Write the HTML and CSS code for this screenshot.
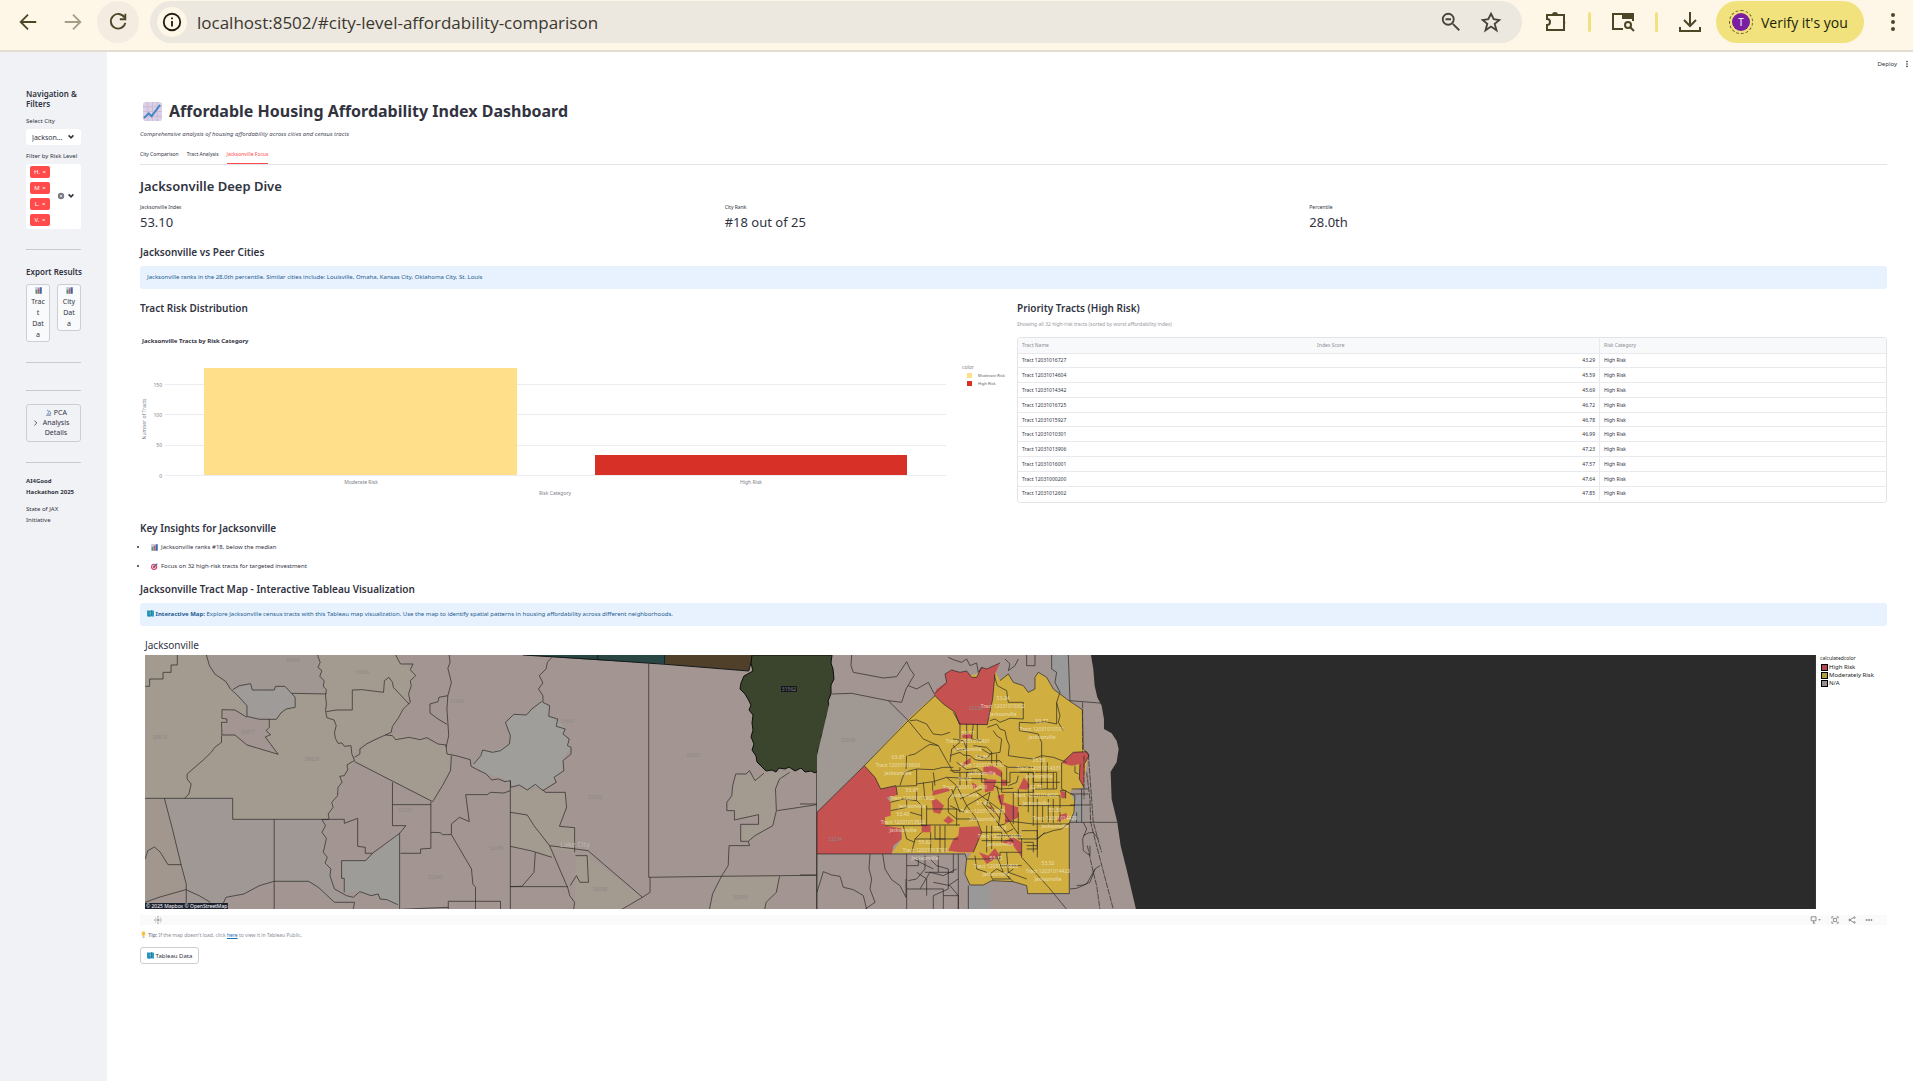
FILE: index.html
```html
<!DOCTYPE html>
<html lang="en">

<head>
    <meta charset="UTF-8">
    <meta name="viewport" content="width=device-width, initial-scale=1.0">
    <title>Affordable Housing Affordability Index Dashboard</title>
    <link rel="stylesheet" href="styles.css">
</head>

<body>

    <!-- Shared emoji symbols -->
    <svg class="symbols" aria-hidden="true">
        <symbol id="emoji-trend" viewBox="0 0 20 20">
            <rect x="0" y="0" width="20" height="20" rx="3" fill="#d9d0e8" />
            <path d="M5 0v20M10 0v20M15 0v20M0 5h20M0 10h20M0 15h20" stroke="#cdb8d4" stroke-width="1" fill="none" />
            <path d="M1 17l5-5 3 3 9-12" stroke="#3f84c4" stroke-width="2" fill="none" />
        </symbol>
        <symbol id="emoji-bars" viewBox="0 0 20 20">
            <rect width="20" height="20" rx="2" fill="#c9cfe0" />
            <rect x="2" y="8" width="5" height="11" fill="#4d9a6a" />
            <rect x="8" y="4" width="5" height="15" fill="#c65b6e" />
            <rect x="14" y="1" width="5" height="18" fill="#3568b4" />
        </symbol>
        <symbol id="emoji-target" viewBox="0 0 20 20">
            <circle cx="9" cy="11" r="9" fill="#d0446a" />
            <circle cx="9" cy="11" r="6" fill="#f3e6ee" />
            <circle cx="9" cy="11" r="4" fill="#d0446a" />
            <path d="M9 11L18 2" stroke="#3c6fae" stroke-width="3" />
        </symbol>
        <symbol id="emoji-map" viewBox="0 0 20 20">
            <path d="M0 1l6 1 7-1 7 1v17l-7-1-7 1-6-1z" fill="#2e9cc8" />
            <path d="M6 2v17M13 1v17" stroke="#1c6f9e" stroke-width="2" />
            <path d="M8 5l4 3-2 6-3-4z" fill="#79bf7d" />
        </symbol>
        <symbol id="emoji-bulb" viewBox="0 0 20 20">
            <path d="M10 1a6 6 0 0 0-3 11v3h6v-3a6 6 0 0 0-3-11z" fill="#f6c445" />
            <rect x="7" y="16" width="6" height="3" fill="#a5a19a" />
        </symbol>
        <symbol id="emoji-microscope" viewBox="0 0 20 20">
            <path d="M7 2l4 9M3 18h14M5 14h8M11 5c6 1 7 9 2 12" stroke="#4a6d9c" stroke-width="2" fill="none" />
        </symbol>
        <symbol id="chevron" viewBox="0 0 10 10">
            <path d="M2 3l3 3 3-3" stroke="#31333f" stroke-width="2" fill="none" />
        </symbol>
    </svg>

    <div class="browser-bar">
        <button class="nav-button" aria-label="Back">
            <svg viewBox="0 0 24 24"><path d="M21 12H5M12 4l-8 8 8 8" /></svg>
        </button>
        <button class="nav-button disabled" aria-label="Forward">
            <svg viewBox="0 0 24 24"><path d="M3 12h16M12 4l8 8-8 8" /></svg>
        </button>
        <button class="nav-button reload" aria-label="Reload">
            <svg viewBox="0 0 24 24"><path d="M19 7a8 8 0 1 0 1 6M20 3v6h-6" /></svg>
        </button>
        <div class="address">
            <span class="site-info">
                <svg viewBox="0 0 24 24"><circle cx="12" cy="12" r="9" /><path d="M12 11v6M12 7v2" /></svg>
            </span>
            <input class="address-input" type="text" aria-label="Address" value="localhost:8502/#city-level-affordability-comparison">
            <button class="address-button" aria-label="Zoom">
                <svg viewBox="0 0 24 24"><circle cx="9" cy="9" r="6" /><path d="M14 14l7 7M6 9h6" /></svg>
            </button>
            <button class="address-button" aria-label="Bookmark">
                <svg viewBox="0 0 24 24"><path d="M12 3l3 6 6 1-5 4 2 7-6-4-6 4 2-7-5-4 6-1z" /></svg>
            </button>
        </div>
        <button class="tool-button" aria-label="Extensions">
            <svg viewBox="0 0 24 24"><path d="M3 5h17v6v9H3v-5a3 3 0 0 0 0-6z" /><path d="M8 5a3 3 0 0 1 6 0zM20 10a3 3 0 0 1 0 5z" fill="#4b4726" stroke="none" /></svg>
        </button>
        <span class="divider"></span>
        <button class="tool-button" aria-label="Search tabs">
            <svg viewBox="0 0 24 24"><path d="M12 19H2V4h20v7" /><path d="M12 4h10v4H12z" fill="#4b4726" /><circle cx="17" cy="15" r="3" /><path d="M19 17l4 4" /></svg>
        </button>
        <span class="divider"></span>
        <button class="tool-button" aria-label="Downloads">
            <svg viewBox="0 0 24 24"><path d="M12 2v13M6 10l6 6 6-6M2 17v4h20v-4" /></svg>
        </button>
        <button class="verify">
            <span class="avatar-ring"><span class="avatar">T</span></span>
            Verify it's you
        </button>
        <button class="menu-button" aria-label="Menu">
            <svg viewBox="0 0 6 22"><circle cx="3" cy="4" r="2" /><circle cx="3" cy="11" r="2" /><circle cx="3" cy="18" r="2" /></svg>
        </button>
    </div>

    <div class="app">
        <aside class="sidebar">
            <h2 class="side-title">Navigation &amp; Filters</h2>
            <label class="side-label" for="citySelect">Select City</label>
            <div class="select-box">
                <select id="citySelect">
                    <option>Jackson...</option>
                </select>
                <svg><use href="#chevron" /></svg>
            </div>
            <p class="side-label" id="riskLabel">Filter by Risk Level</p>
            <div class="multi-box" role="group" aria-labelledby="riskLabel">
                <div class="tags">
                    <button class="tag">H. <span>×</span></button>
                    <button class="tag">M <span>×</span></button>
                    <button class="tag">L. <span>×</span></button>
                    <button class="tag">V. <span>×</span></button>
                </div>
                <button class="clear" aria-label="Clear all">
                    <svg viewBox="0 0 10 10"><circle cx="5" cy="5" r="4" fill="#7b7d85" /><path d="M4 4l2 2M6 4l-2 2" stroke="#fff" /></svg>
                </button>
                <svg class="chevron"><use href="#chevron" /></svg>
            </div>
            <hr>
            <h2 class="side-title export">Export Results</h2>
            <div class="export-buttons">
                <button class="side-button"><svg class="emoji"><use href="#emoji-bars" /></svg><br>Trac<br>t<br>Dat<br>a</button>
                <button class="side-button"><svg class="emoji"><use href="#emoji-bars" /></svg><br>City<br>Dat<br>a</button>
            </div>
            <hr>
            <hr class="close">
            <button class="expander">
                <svg class="arrow" viewBox="0 0 10 10"><path d="M3 2l3 3-3 3" /></svg>
                <span><svg class="emoji"><use href="#emoji-microscope" /></svg> PCA Analysis Details</span>
            </button>
            <hr>
            <p class="side-text"><strong>AI4Good Hackathon 2025</strong></p>
            <p class="side-text">State of JAX Initiative</p>
        </aside>

        <main class="main">
            <div class="app-header">
                <button class="deploy">Deploy</button>
                <button class="app-menu" aria-label="App menu">
                    <svg viewBox="0 0 4 10"><circle cx="2" cy="2" r="1" /><circle cx="2" cy="5" r="1" /><circle cx="2" cy="8" r="1" /></svg>
                </button>
            </div>

            <div class="content">
                <h1><svg class="title-emoji"><use href="#emoji-trend" /></svg>Affordable Housing Affordability Index Dashboard</h1>
                <p class="subtitle">Comprehensive analysis of housing affordability across cities and census tracts</p>

                <nav class="tabs">
                    <button class="tab">City Comparison</button>
                    <button class="tab">Tract Analysis</button>
                    <button class="tab active">Jacksonville Focus</button>
                </nav>

                <h2>Jacksonville Deep Dive</h2>
                <div class="metrics">
                    <div>
                        <p class="metric-label">Jacksonville Index</p>
                        <p class="metric-value">53.10</p>
                    </div>
                    <div>
                        <p class="metric-label">City Rank</p>
                        <p class="metric-value">#18 out of 25</p>
                    </div>
                    <div>
                        <p class="metric-label">Percentile</p>
                        <p class="metric-value">28.0th</p>
                    </div>
                </div>

                <h3>Jacksonville vs Peer Cities</h3>
                <div class="info">Jacksonville ranks in the 28.0th percentile. Similar cities include: Louisville, Omaha, Kansas City, Oklahoma City, St. Louis</div>

                <div class="columns">
                    <section>
                        <h3>Tract Risk Distribution</h3>
                        <svg class="chart" viewBox="0 0 870 190">
                            <text class="chart-title" x="2" y="23">Jacksonville Tracts by Risk Category</text>
                            <path class="grid" d="M25 64.500H806M25 94.500H806M25 125.500H806M25 155.500H806" />
                            <rect x="64" y="48" width="313" height="107" fill="#ffdf8a" />
                            <rect x="455" y="135" width="312" height="20" fill="#d73027" />
                            <g class="tick end">
                                <text x="22" y="67">150</text>
                                <text x="22" y="97">100</text>
                                <text x="22" y="127">50</text>
                                <text x="22" y="158">0</text>
                            </g>
                            <g class="tick middle">
                                <text x="221" y="164">Moderate Risk</text>
                                <text x="611" y="164">High Risk</text>
                            </g>
                            <text class="axis" x="415" y="175">Risk Category</text>
                            <text class="axis" transform="translate(6 99) rotate(-90)">Number of Tracts</text>
                            <text class="axis start" x="822" y="49">color</text>
                            <rect x="827" y="53" width="5" height="5" fill="#ffdf8a" />
                            <rect x="827" y="61" width="5" height="5" fill="#d73027" />
                            <g class="tick legend-text">
                                <text x="838" y="57">Moderate Risk</text>
                                <text x="838" y="65">High Risk</text>
                            </g>
                        </svg>
                    </section>
                    <section>
                        <h3>Priority Tracts (High Risk)</h3>
                        <p class="caption">Showing all 32 high-risk tracts (sorted by worst affordability index)</p>
                        <div class="table-frame">
                            <table>
                                <thead>
                                    <tr><th>Tract Name</th><th>Index Score</th><th>Risk Category</th></tr>
                                </thead>
                                <tbody>
                                    <tr><td>Tract 12031016727</td><td>43.29</td><td>High Risk</td></tr>
                                    <tr><td>Tract 12031014604</td><td>45.59</td><td>High Risk</td></tr>
                                    <tr><td>Tract 12031014342</td><td>45.69</td><td>High Risk</td></tr>
                                    <tr><td>Tract 12031016725</td><td>46.72</td><td>High Risk</td></tr>
                                    <tr><td>Tract 12031015927</td><td>46.78</td><td>High Risk</td></tr>
                                    <tr><td>Tract 12031010301</td><td>46.99</td><td>High Risk</td></tr>
                                    <tr><td>Tract 12031013906</td><td>47.23</td><td>High Risk</td></tr>
                                    <tr><td>Tract 12031016001</td><td>47.57</td><td>High Risk</td></tr>
                                    <tr><td>Tract 12031000200</td><td>47.64</td><td>High Risk</td></tr>
                                    <tr><td>Tract 12031012602</td><td>47.85</td><td>High Risk</td></tr>
                                </tbody>
                            </table>
                        </div>
                    </section>
                </div>

                <h3>Key Insights for Jacksonville</h3>
                <ul class="insights">
                    <li><svg class="emoji"><use href="#emoji-bars" /></svg> Jacksonville ranks #18, below the median</li>
                    <li><svg class="emoji"><use href="#emoji-target" /></svg> Focus on 32 high-risk tracts for targeted investment</li>
                </ul>

                <h3>Jacksonville Tract Map - Interactive Tableau Visualization</h3>
                <div class="info"><svg class="emoji"><use href="#emoji-map" /></svg> <strong>Interactive Map:</strong> Explore Jacksonville census tracts with this Tableau map visualization. Use the map to identify spatial patterns in housing affordability across different neighborhoods.</div>

                <div class="viz">
                    <p class="viz-title">Jacksonville</p>
                    <div class="viz-body">
                        <div class="map-wrap">
                            <svg class="map" viewBox="145 656 1671 254">
                                <rect x="145" y="656" width="1671" height="254" fill="#a39692" />

                                <!-- Western counties -->
                                <g transform="translate(130 640) scale(.4464 .3333)">
                                    <g class="land">
                                        <path fill="#a39b90" d="M34 48H171L180 90L215 130L262 190V240H330L345 210L370 205V163L440 165V236L460 260V310L500 325L503 365L480 410L465 460L450 540H230V478H34Z" />
                                        <path fill="#a09793" d="M171 48H420L430 90L440 165L368 163L340 142L323 152L270 150L232 152L180 90Z" />
                                        <path fill="#a39b90" d="M420 48H595L640 100L620 200L580 285L520 310L503 350L500 325L460 310V260L440 236L440 165Z" />
                                        <path fill="#a39b90" d="M503 365L520 318L585 287L660 300L710 325L720 350L716 400L678 488Z" />
                                        <path fill="#9e9b98" d="M230 155L270 135L272 150L323 153L345 142L370 170V205L345 210L328 238L290 240L262 232V205Z" />
                                        <path fill="#a39692" d="M206 212L240 214L262 235H312L306 270L316 288L305 295L332 346L262 318L236 291L205 288L217 250Z" />
                                        <path fill="#9f9894" d="M77 478H230V541H445L432 560L440 600L434 640L450 690L462 760L500 775L503 790H458L404 730H325L285 738L250 765L205 790L190 811H126V735Z" />
                                        <path fill="#9f9e9b" d="M860 226L888 228L920 188L938 196L940 230L968 255L975 290L988 325L970 360L968 395L952 425L925 452L905 440L890 450L872 440L853 443L840 420L800 405L768 378L790 335L812 340L850 315L852 290L841 255Z" />
                                        <path fill="#9e9c98" d="M474 665H528L604 583V800L575 790L555 765L540 768L515 758L480 760V718L474 716Z" />
                                        <path fill="#a39a90" d="M852 448L890 450L925 452L930 460L976 464L978 510L962 562L996 568V640L945 630L950 655L900 636L852 622Z" />
                                        <path fill="#a39a90" d="M998 650H1026L1148 775L1102 811H996Z" />
                                        <path fill="#a39a90" d="M1320 712L1455 710L1448 760L1422 811H1298Z" />
                                        <path fill="#a39a90" d="M1357 405L1400 415L1420 403L1478 398L1450 430L1448 515L1440 560L1385 607H1368V562L1408 556V527L1354 543V515L1338 512L1350 470Z" />
                                        <path fill="#a2978f" d="M34 478H77L115 675L126 755L34 800Z" />
                                    </g>
                                    <g class="border">
                                        <path d="M34 142H44V120H74V100H92V78H106V48M171 48L178 80L190 105L215 128L225 150L240 168L262 200V232L290 241H328L338 222L350 210L370 205V175L362 163L440 165M230 152L245 140L270 134L274 153H323L326 142L347 142L362 163" />
                                        <path d="M420 48L426 70L421 85L430 95L425 112L435 125L433 142L440 152L438 170L440 195L438 215L441 236L457 243L462 260L458 280L460 298L466 313L475 312L480 322L495 320L497 345L503 365L498 368L486 378L488 392L480 410L470 412L475 430L466 445L465 470L452 490L455 505L444 525L446 540" />
                                        <path d="M440 218L462 213H498V153L520 152L568 160L570 125L580 115L588 130L590 145L625 195M595 48L606 75L634 75L628 92L640 110L628 125L630 140L624 165L628 190L612 210L602 235L588 262L585 280L572 288L588 290L595 302L625 295L650 302L665 296L690 315L708 318L710 345L730 350L762 362L764 382L778 392L798 405L810 423L825 420L840 428L852 425L853 445L872 438L890 453L908 436L925 455L955 430L950 415L972 395L970 365L988 345V325L980 320L984 300L970 285L975 270L955 262L958 240L938 232L940 200L925 190V170L915 150L925 132L917 110L932 90L935 70L945 55M503 355L515 345V330L530 315L552 300L572 288M715 48L717 70L712 88L720 130L712 170L710 210L714 290L708 325M710 256L690 240L672 222V195L690 188L692 175L712 170" />
                                        <path d="M503 368L678 488L700 440L718 395L720 350M588 430V560H618L604 583M588 497H674V488M674 497V628L651 630V643H606M674 580L695 581L700 587H720M206 288L205 250H217V240L206 238V212L235 213L262 235M205 288H235L262 318L332 346L303 294L315 287L305 275L312 265V240M205 290V310L190 325L182 340L165 362L128 405V420L137 435L132 465L122 478" />
                                        <path d="M34 478H230V541H480V553L510 538V622L527 625V643H543L604 583V811M77 478L95 570L115 680L126 735V811M323 541V811M34 660L40 635L55 624L68 640L85 677H115M34 790L65 775L125 752L155 770L180 790M205 805L215 775L255 765L290 740L323 727H400L422 745L458 790H503L500 811M446 541L430 542L438 560L430 580L440 598L433 640L442 655L437 672L450 690L448 710L458 750L485 770L500 775L515 758L540 770L556 765L560 780L575 782L600 797M543 643L528 665H474V718H480V760" />
                                        <path d="M860 226L888 228L900 210L922 188M860 226L841 250L852 290L850 315L830 335L812 340L790 333L786 350L770 375M852 425V811M852 455L838 462L808 460L800 467H752L760 548L738 535L720 555V587L730 610L765 690L768 735L774 745V811M925 452L930 460H975L978 505L962 562L996 566V640M852 520L890 528L905 560L940 620L980 745M852 622L900 636L945 655M940 620L1026 635L1148 775L1165 760V715M1162 75V715L1320 712L1538 709M908 640L905 700L878 742L852 743H980L985 770L996 790L994 811M998 650H1024L1027 730H1008L1000 710L986 740M1148 775L1102 811M713 811V787H830V811M606 811L713 805" />
                                        <path d="M1538 390V811M1400 425L1388 395L1380 405H1357L1350 440L1348 470L1337 490V515H1354V543L1408 527V556H1368V607H1385L1400 590L1440 560L1448 515L1446 450L1455 420L1478 400M1450 515L1500 505L1538 497M1385 607L1388 620L1342 620L1340 680L1325 712L1305 765L1298 811M1455 712L1448 760L1425 790L1422 811M1400 425L1420 403" />
                                    </g>
                                    <path fill="#284644" d="M880 48H1200V75L1050 64Z" />
                                    <path fill="#50402a" d="M1200 48H1396L1386 96L1200 76Z" />
                                    <path class="state-line" d="M880 48L1050 62L1200 76L1386 96M1048 48V62M1198 48V76M1396 48L1386 96" />
                                </g>

                                <path class="selected" d="M752 656L751 664L753 672L744 677L741 684L740 690L745 695L748 700L751 706L749 711L753 716L752 724L753 731L751 738L754 745L752 751L756 757L757 763L762 768L766 772L772 771L776 773L779 769L785 770L789 768L795 772L801 769L805 773L811 772L815 774L820 770L821 765L818 759L818 750L823 744L821 738L824 732L827 726L826 718L830 710L828 702L831 695L831 686L834 680L833 670L831 664L832 656Z" />

                                <!-- Duval county and the coast -->
                                <g transform="translate(800 640) scale(.3333)">
                                    <path fill="#a09892" d="M51 350L95 165L265 185L325 245L193 380L51 520Z" />
                                    <path fill="#99999a" d="M750 48H805L810 180L770 160ZM505 740H570V811H505ZM810 470H850V550H810Z" />
                                    <path class="moderate" d="M193 380L325 240L380 190L405 170L440 130L583 90L600 125L625 105L640 130L670 140L685 160L705 150V115L715 100L740 115L760 150L800 180L847 212L850 330L865 345L850 445L810 455L825 490L822 520L808 552V762L683 764L680 740L640 728L575 725L550 738H510L495 705L500 660L515 643H275L305 600V580L255 558V530L270 530L272 480L285 440L242 450Z" />
                                    <g class="high">
                                        <path d="M51 520L193 380L225 415L242 450L288 440L292 468L260 476L272 490V530L255 535V560L304 568L305 600L280 620L275 645H51Z" />
                                        <path d="M403 168L410 150L440 130L435 105L455 93L480 100L500 96L515 115L530 115L545 85L560 90L600 72L585 105L578 180L562 257H478L465 220L430 195Z" />
                                        <path d="M487 285H517V298H487ZM485 385L492 370L512 356V372ZM550 385L575 378L605 395V415L585 405L570 408L550 402ZM552 420L590 422L580 455L555 460ZM398 455L445 445L450 455L398 470ZM515 430L535 440L520 450ZM605 422H620V440H605ZM655 450L672 415L690 440L680 452Z" />
                                        <path d="M395 485L410 480L432 500L420 525L400 520ZM430 545L445 530L462 545L445 555ZM365 558H392V580H365ZM478 565L535 562L545 580L520 640H478L445 635L460 600L475 590ZM565 500L575 505L590 530ZM592 470L612 465L610 490L655 505V535L615 555V500L600 495ZM605 610L640 595L665 610V655L640 620ZM537 640L565 650L585 628L600 650L560 675Z" />
                                        <path d="M785 372L820 340L860 338L867 350L855 372L852 445L838 420L840 375L815 380ZM780 455L797 460V478H785ZM770 548L780 528L800 522L802 538Z" />
                                    </g>
                                    <g class="border">
                                        <path d="M155 48L153 80L160 100L250 117L290 113L320 68L330 90L343 108L318 150L305 190L265 185L155 163L95 165M265 185L325 245L193 380L51 520V811M325 140L350 150L385 130L403 165L440 130L435 105L455 93L480 100L500 96L515 115L530 115L545 85L560 90L600 72M325 245L405 170M403 168L430 195L465 220L478 255L562 257L578 180L585 105" />
                                        <path d="M445 55L460 62L485 70L500 60L510 80L530 72L535 100L545 85M615 60L630 75L625 95L645 80L655 60M680 48V80H705V48M600 125L625 105L640 130L670 140L685 160L705 150V115L715 100L740 115L760 150L800 180L847 212L850 330L865 345M755 48V90L770 100L765 130L780 160L770 190L780 230L775 250L790 275" />
                                        <path d="M193 380L225 415L242 450L288 440L292 468M51 645H495L500 660L495 705L510 738H550L575 725L640 728L680 740L683 764H808V552M325 245L370 300L415 320L440 365L460 400M330 245L350 243L380 255L388 268L400 285L425 288L450 280M460 220L480 255V310L455 330L450 370M500 255V380M520 255L515 300L545 305M532 255V300M325 350L345 345L375 325L390 316L415 320M300 440L306 420L315 400L350 390L400 392L430 385L460 385M350 390V440L290 442M350 435L400 428L440 415L500 418L560 420M320 350L318 390" />
                                        <path d="M583 110L592 140L620 155L625 190H670V240L630 238L600 250L585 240L570 245M658 250V275L690 280L715 285L720 300L725 310V350L700 360L660 355L625 350L628 320L620 300L615 275L600 270L590 255L562 265M658 250L700 252L735 248L770 255V190M725 350L760 355L800 370M545 330L570 345L600 340L605 300L590 290L580 275M450 350L480 340L490 348L510 350L525 362L540 365H600L610 378L625 385H700M460 400H545V430H630V400H700V430M440 415L470 440L460 460L445 480V520L470 540H530M398 455V430M272 490L310 480L350 485L365 500V560M320 480V505L272 515M350 455V485M255 560H380V500M380 510H470V560M392 580V640M365 580L345 600L335 640M405 560V600H475M420 560V640M435 560V640M345 600H435M365 558H480" />
                                        <path d="M470 440L500 500L530 540L545 580L520 640M500 500L570 460M480 480L545 450M455 450L480 520M530 460L610 520L665 600V655M545 490L640 610M560 480L600 540M590 440L605 500L595 560L615 555M605 400V460H700V400M620 385V440M655 450V500H825M655 520V600H712M685 400V520M700 450V560M712 480V655M728 500V550M745 480V550M760 480V552M690 470H780V550M705 400H770V450H705M725 350V450M742 370V450M760 400V450M660 400H700M640 460V555M615 545L700 555H808M712 600L730 585L760 575L785 570L808 552M735 580L712 600M545 580H605V610M560 560V640M575 560V630M590 590H665M545 605H640M665 575H712V630H680" />
                                        <path d="M460 300L490 305L500 330L470 335L460 318M520 320L560 325L575 340L560 360L530 350M625 440L650 430L655 410M570 460L560 500L585 520M450 500L490 520L500 500M400 400L405 440M370 430L375 480M330 520L365 530M310 560L320 600L345 610M470 370L500 392L530 388L548 400M580 440L600 450L640 448M600 560L620 580L640 570M610 700L590 690L570 705L580 725M525 650L530 690L560 700" />
                                        <path d="M500 660H600V640H665M590 650L610 700L640 728M620 640L625 700L680 720M665 655L750 750L800 811M665 680H600M640 690L620 705L630 720H580M670 610H700V640M680 620H712M520 400H500V440M480 400V440M575 340V375M590 345V380M450 395H480V385M785 372L820 340L860 338L867 350L855 372M840 375L838 420L852 445M785 372V450L825 470L822 520L808 552M825 380V400L835 405M780 455H797V478M700 430H780" />
                                        <path d="M810 185L910 193M805 48L810 185M808 550H952M810 465H865M830 550V520M810 498H870M0 495L51 495M0 708H51M815 450H865M845 450V550M830 740L850 738L870 730L885 690L900 680M810 750L830 748L860 735L885 690M850 590L865 582L880 580L895 600M870 620V650L850 635L848 600L860 570L850 550" />
                                        <path d="M848 190V340M860 400L870 480L872 550L895 640L940 811M865 345L880 550L905 640M862 620L880 700L890 740L900 811M852 350V480" stroke-dasharray="6 1" />
                                        <path d="M51 760L70 698L95 708L120 712L130 745L160 752L190 770L200 811M210 645L207 690L215 720L210 750L225 790L195 811M248 645L255 690L275 722L300 740L318 775V720M320 645V811M320 680H355V655M320 750H430V811M375 650V690L350 720L325 725M375 700H460V645M390 660L410 680L445 690V750L400 770V811M360 750L390 700L430 710L470 690M430 770H475V811M475 645V811M505 740V811M350 700L380 720V770M340 660L400 690M415 650V700M445 740L475 720M400 730L450 740L475 770" />
                                    </g>
                                    <path fill="#2b2b2b" d="M873 48L880 90L884 140L892 175L905 200L912 240V270L935 283L950 305L956 330L950 370L932 398L935 480L952 550L962 620L982 700L1008 811H3048V48Z" />
                                </g>

                                <g class="county-labels">
                                    <text x="293" y="663">39069</text>
                                    <text x="362" y="675">31636</text>
                                    <text x="160" y="740">39810</text>
                                    <text x="312" y="762">39829</text>
                                    <text x="248" y="735">39817</text>
                                    <text x="457" y="704">31636</text>
                                    <text x="568" y="724">31647</text>
                                    <text x="693" y="758">32063</text>
                                    <text x="405" y="813">32331</text>
                                    <text x="595" y="800">32052</text>
                                    <text x="435" y="880">32340</text>
                                    <text x="496" y="851">32059</text>
                                    <text x="600" y="892">32038</text>
                                    <text x="740" y="900">32083</text>
                                    <text x="848" y="743">32009</text>
                                    <text x="835" y="842">32234</text>
                                    <text x="976" y="711">32226</text>
                                    <text class="city" x="575" y="848">Lake City</text>
                                </g>
                                <rect x="781" y="687" width="16" height="6" fill="#15181a" />
                                <text class="selected-label" x="789" y="692">31562</text>

                                <g class="tract-labels">
                                    <text><tspan x="1003" y="701">53.24</tspan><tspan x="1003" y="709">Tract 12031010302</tspan><tspan x="1003" y="717">Jacksonville</tspan></text>
                                    <text><tspan x="1042" y="724">59.77</tspan><tspan x="1042" y="732">Tract 12031010101</tspan><tspan x="1042" y="740">Jacksonville</tspan></text>
                                    <text><tspan x="968" y="736">55.17</tspan><tspan x="968" y="744">Tract 12031010401</tspan><tspan x="968" y="752">Jacksonville</tspan></text>
                                    <text><tspan x="898" y="760">63.97</tspan><tspan x="898" y="768">Tract 12031010603</tspan><tspan x="898" y="776">Jacksonville</tspan></text>
                                    <text><tspan x="982" y="760">54.86</tspan><tspan x="982" y="768">Tract 12031010700</tspan><tspan x="982" y="776">Jacksonville</tspan></text>
                                    <text><tspan x="1039" y="763">55.86</tspan><tspan x="1039" y="771">Tract 12031014331</tspan><tspan x="1039" y="779">Jacksonville</tspan></text>
                                    <text><tspan x="965" y="782">50.63</tspan><tspan x="965" y="790">Tract 12031012400</tspan><tspan x="965" y="798">Jacksonville</tspan></text>
                                    <text><tspan x="912" y="793">53.67</tspan><tspan x="912" y="801">Tract 12031011902</tspan><tspan x="912" y="809">Jacksonville</tspan></text>
                                    <text><tspan x="1036" y="790">52.73</tspan><tspan x="1036" y="798">Tract 12031014600</tspan><tspan x="1036" y="806">Jacksonville</tspan></text>
                                    <text><tspan x="983" y="806">51.47</tspan><tspan x="983" y="814">Tract 12031016000</tspan><tspan x="983" y="822">Jacksonville</tspan></text>
                                    <text><tspan x="903" y="817">53.43</tspan><tspan x="903" y="825">Tract 12031013522</tspan><tspan x="903" y="833">Jacksonville</tspan></text>
                                    <text><tspan x="1055" y="813">55.33</tspan><tspan x="1055" y="821">Tract 12031014429</tspan><tspan x="1055" y="829">Jacksonville</tspan></text>
                                    <text><tspan x="1000" y="831">55.18</tspan><tspan x="1000" y="839">Tract 12031016606</tspan><tspan x="1000" y="847">Jacksonville</tspan></text>
                                    <text><tspan x="925" y="845">55.62</tspan><tspan x="925" y="853">Tract 12031013703</tspan><tspan x="925" y="861">Jacksonville</tspan></text>
                                    <text><tspan x="996" y="861">53.15</tspan><tspan x="996" y="869">Tract 12031016803</tspan><tspan x="996" y="877">Jacksonville</tspan></text>
                                    <text><tspan x="1048" y="866">53.52</tspan><tspan x="1048" y="874">Tract 12031014423</tspan><tspan x="1048" y="882">Jacksonville</tspan></text>
                                </g>
                            </svg>
                            <span class="credit">© 2025 Mapbox © OpenStreetMap</span>
                        </div>
                        <div class="map-legend">
                            <p>calculatedcolor</p>
                            <ul>
                                <li><span class="swatch high-risk"></span>High Risk</li>
                                <li><span class="swatch moderate-risk"></span>Moderately Risk</li>
                                <li><span class="swatch"></span>N/A</li>
                            </ul>
                        </div>
                    </div>
                    <div class="viz-toolbar">
                        <button aria-label="Tableau Public">
                            <svg viewBox="0 0 10 10"><path d="M5 3v4M3 5h4M5 0v2M5 8v2M0 5h2M8 5h2M2 2v1M8 2v1M2 7v1M8 7v1" /></svg>
                        </button>
                        <span class="spacer"></span>
                        <button aria-label="Device">
                            <svg class="wide" viewBox="0 0 14 10"><path d="M1 1h6v5H1zM4 6v3M3 9h3" /><path d="M10 4h3l-2 2z" fill="#666" stroke="none" /></svg>
                        </button>
                        <button aria-label="Full screen">
                            <svg viewBox="0 0 10 10"><path d="M1 3V1h2M7 1h2v2M9 7v2H7M3 9H1V7M3 3h4v4H3z" /></svg>
                        </button>
                        <button aria-label="Share">
                            <svg viewBox="0 0 10 10"><path d="M2 5l5-3M2 5l5 3" /><circle cx="2" cy="5" r="1" /><circle cx="8" cy="2" r="1" /><circle cx="8" cy="8" r="1" /></svg>
                        </button>
                        <button aria-label="More">
                            <svg viewBox="0 0 10 10"><path d="M1 5h2M4 5h2M7 5h2" stroke-width="2" /></svg>
                        </button>
                    </div>
                </div>

                <p class="tip"><svg class="emoji"><use href="#emoji-bulb" /></svg> <strong>Tip:</strong> If the map doesn't load, click <a href="#tableau">here</a> to view it in Tableau Public.</p>
                <button class="data-button"><svg class="emoji"><use href="#emoji-map" /></svg> Tableau Data</button>
            </div>
        </main>
    </div>
</body>

</html>
```
FILE: styles.css
```css
* {
    box-sizing: border-box;
    margin: 0;
    padding: 0;
}

body {
    min-height: 100vh;
    display: flex;
    flex-direction: column;
    font-family: 'Source Sans Pro', 'Noto Sans', sans-serif;
    font-size: 7px;
    color: #31333f;
    background-color: #fff;
}

button,
select,
input {
    font: inherit;
    color: inherit;
    background: none;
    border: none;
}

.symbols {
    display: none;
}

/* Browser toolbar */
.browser-bar {
    display: flex;
    align-items: center;
    height: 52px;
    padding: 0 8px 6px 7px;
    background-color: #fef7e8;
    border-bottom: 2px solid #e2dfd2;
}

.browser-bar svg {
    width: 24px;
    height: 24px;
    fill: none;
    stroke: #4b4726;
    stroke-width: 2;
    display: block;
}

.nav-button {
    width: 42px;
    height: 42px;
    margin-right: 3px;
    padding: 10px;
    border-radius: 50%;
}

.browser-bar .nav-button svg {
    width: 22px;
    height: 22px;
}

.nav-button.disabled {
    opacity: 0.5;
}

.nav-button.reload {
    margin-right: 11px;
    background-color: #f4ece0;
}

.address {
    flex: 1;
    display: flex;
    align-items: center;
    height: 42px;
    margin-right: 2px;
    padding: 0 18px 0 7px;
    border-radius: 21px;
    background-color: #ece7df;
}

.site-info {
    width: 30px;
    height: 30px;
    padding: 4px;
    border-radius: 50%;
    background-color: #fef7e8;
}

.browser-bar .site-info svg {
    width: 22px;
    height: 22px;
    stroke: #1f1d12;
}

.address-input {
    flex: 1;
    margin-left: 10px;
    font-family: 'Segoe UI', 'Open Sans', sans-serif;
    font-size: 17px;
    color: #3a382f;
}

.address-button {
    width: 24px;
    margin-left: 16px;
}

.browser-bar .address-button svg {
    width: 22px;
    height: 22px;
    stroke: #45433a;
}

.tool-button {
    margin: 0 20px;
}

.divider {
    width: 3px;
    height: 20px;
    border-radius: 2px;
    background-color: #f3e180;
}

.verify {
    display: flex;
    align-items: center;
    gap: 8px;
    width: 148px;
    height: 42px;
    margin-left: -6px;
    padding: 0 13px;
    border-radius: 21px;
    background-color: #f1e27d;
    font-family: 'Segoe UI', 'Open Sans', sans-serif;
    font-size: 14px;
    white-space: nowrap;
    color: #211f0a;
}

.avatar-ring {
    width: 24px;
    height: 24px;
    padding: 2px;
    border: 1px dashed #6b6320;
    border-radius: 50%;
    flex: none;
}

.avatar {
    display: block;
    width: 18px;
    height: 18px;
    border-radius: 50%;
    background-color: #7b1fa2;
    color: #fff;
    font-size: 10px;
    line-height: 18px;
    text-align: center;
}

.menu-button {
    width: 24px;
    margin: 0 0 0 17px;
}

.browser-bar .menu-button svg {
    width: 6px;
    height: 22px;
    margin: 0 auto;
    fill: #4b4726;
    stroke: none;
}

/* App shell */
.app {
    flex: 1;
    display: flex;
}

.sidebar {
    flex: none;
    width: 107px;
    padding: 37px 26px;
    background-color: #f0f2f6;
}

.emoji {
    width: 7px;
    height: 7px;
    vertical-align: -1px;
}

.side-title {
    font-size: 8px;
    font-weight: 600;
    line-height: 10px;
    margin-bottom: 7px;
}

.side-label {
    display: block;
    font-size: 6px;
    line-height: 10px;
    margin-bottom: 3px;
    white-space: nowrap;
}

.select-box {
    position: relative;
    height: 16px;
    margin-bottom: 6px;
    border-radius: 3px;
    background-color: #fff;
}

.select-box select {
    width: 100%;
    height: 16px;
    padding-left: 6px;
    appearance: none;
    font-size: 7px;
}

.select-box svg {
    position: absolute;
    top: 4px;
    right: 6px;
    width: 8px;
    height: 8px;
}

.multi-box {
    display: flex;
    align-items: center;
    padding: 2px 6px 3px 4px;
    border-radius: 3px;
    background-color: #fff;
}

.tags {
    display: flex;
    flex-direction: column;
    gap: 4px;
    margin-right: auto;
}

.tag {
    width: 20px;
    height: 12px;
    border-radius: 2px;
    background-color: #ff4b4b;
    color: #fff;
    font-size: 6px;
    line-height: 12px;
}

.tag span {
    margin-left: 1px;
}

.clear svg,
.multi-box .chevron {
    display: block;
    width: 8px;
    height: 8px;
}

.clear {
    margin-right: 2px;
}

hr {
    border: none;
    border-top: 1px solid #c9cbd1;
    margin: 20px 0 19px;
}

hr.close {
    margin: 27px 0 13px;
}

.side-title.export {
    white-space: nowrap;
    margin: -2px 0 7px;
}

.export-buttons {
    display: flex;
    align-items: flex-start;
    gap: 7px;
}

.side-button {
    flex: 1;
    padding: 0 0 1px;
    border: 1px solid #cdced4;
    border-radius: 3px;
    background-color: #f9fafc;
    font-size: 7px;
    line-height: 11px;
}

.expander {
    display: flex;
    align-items: center;
    width: 100%;
    height: 38px;
    padding-left: 5px;
    border: 1px solid #cdced4;
    border-radius: 3px;
    font-size: 7px;
    line-height: 10px;
}

.expander span {
    flex: 1;
    margin-right: 8px;
}

.arrow {
    width: 8px;
    height: 8px;
    fill: none;
    stroke: #31333f;
    flex: none;
}

.side-text {
    margin-top: -6px;
    margin-bottom: 12px;
    font-size: 6px;
    line-height: 11px;
}

.main {
    flex: 1;
    min-width: 0;
}

.app-header {
    display: flex;
    justify-content: flex-end;
    align-items: center;
    gap: 8px;
    height: 24px;
    padding-right: 4px;
}

.deploy {
    font-size: 6px;
}

.app-menu svg {
    display: block;
    width: 4px;
    height: 8px;
    fill: #31333f;
}

.content {
    padding: 23px 26px 40px 33px;
}

h1 {
    display: flex;
    align-items: center;
    font-size: 16px;
    font-weight: 700;
    line-height: 24px;
    margin-bottom: 5px;
}

.title-emoji {
    width: 19px;
    height: 19px;
    margin: 0 7px 0 3px;
}

.subtitle {
    font-size: 6px;
    font-style: italic;
    line-height: 12px;
    color: #4b4d58;
    margin-bottom: 8px;
}

.tabs {
    display: flex;
    gap: 8px;
    border-bottom: 1px solid #e3e4e8;
    margin-bottom: 11px;
}

.tab {
    padding-bottom: 3px;
    font-size: 5px;
    line-height: 12px;
    border-bottom: 1px solid transparent;
}

.tab.active {
    color: #ff4b4b;
    border-bottom-color: #ff4b4b;
}

h2 {
    font-size: 13px;
    font-weight: 600;
    line-height: 20px;
    margin-bottom: 7px;
}

.metrics {
    display: grid;
    grid-template-columns: repeat(3, 1fr);
    gap: 7px;
    margin-bottom: 14px;
}

.metric-label {
    font-size: 5px;
    line-height: 8px;
    margin-bottom: 2px;
}

.metric-value {
    font-size: 13px;
    line-height: 18px;
}

h3 {
    font-size: 10px;
    font-weight: 600;
    line-height: 14px;
    margin-bottom: 7px;
}

.info {
    padding: 6px 7px;
    border-radius: 3px;
    background-color: #e8f2fe;
    color: #1d5c90;
    font-size: 6px;
    line-height: 11px;
    margin-bottom: 12px;
}

.columns {
    display: grid;
    grid-template-columns: 1fr 1fr;
    gap: 7px;
    margin-bottom: 11px;
}

.columns h3 {
    margin-bottom: 5px;
}

.chart {
    display: block;
    width: 100%;
}

.chart-title {
    font-size: 6px;
    font-weight: 700;
    fill: #31333f;
}

.grid {
    stroke: #ececf0;
}

.tick {
    font-size: 5px;
    fill: #7d7f8a;
}

.end {
    text-anchor: end;
}

.middle {
    text-anchor: middle;
}

.legend-text {
    font-size: 4px;
    fill: #5b5d68;
}

.axis {
    font-size: 5px;
    fill: #7d7f8a;
    text-anchor: middle;
}

.axis.start {
    text-anchor: start;
}

.caption {
    font-size: 5px;
    line-height: 8px;
    color: #9a9ba3;
    margin-bottom: 9px;
}

.table-frame {
    height: 166px;
    border: 1px solid #e3e4e8;
    border-radius: 3px;
    overflow: hidden;
}

table {
    width: 100%;
    height: 162px;
    table-layout: fixed;
    border-collapse: collapse;
    font-size: 5px;
}

th {
    height: 15px;
    padding: 0 4px;
    background-color: #f8f9fb;
    color: #8a8c96;
    font-weight: 400;
    text-align: left;
    border-bottom: 1px solid #e9eaee;
}

th:nth-child(1) {
    width: 34%;
}

th:nth-child(2) {
    width: 33%;
}

td {
    padding: 0 4px;
    border-bottom: 1px solid #e9eaee;
}

tbody tr:last-child td {
    border-bottom: none;
}

th:nth-child(2),
td:nth-child(2) {
    border-right: 1px solid #e9eaee;
}

td:nth-child(2) {
    text-align: right;
}

.insights {
    list-style: none;
    margin: -1px 0 10px;
}

.insights li {
    display: flex;
    align-items: center;
    gap: 3px;
    font-size: 6px;
    line-height: 12px;
    margin-bottom: 7px;
}

.insights li::before {
    content: '';
    width: 2px;
    height: 2px;
    margin: 0 9px 0 -3px;
    border-radius: 50%;
    background-color: #31333f;
}

/* Tableau embed */
.viz-title {
    padding-left: 5px;
    font-family: 'Noto Sans', sans-serif;
    font-size: 10px;
    line-height: 14px;
    margin-bottom: 3px;
}

.viz-body {
    display: grid;
    grid-template-columns: 1fr 67px;
    gap: 4px;
    padding-left: 5px;
    margin-bottom: 6px;
}

.map-wrap {
    position: relative;
}

.map {
    display: block;
    width: 100%;
}

.border {
    fill: none;
    stroke: #2a2826;
}

.border path,
.state-line {
    vector-effect: non-scaling-stroke;
    stroke-width: 0.7px;
}

.state-line {
    fill: none;
    stroke: #14181a;
    stroke-width: 1px;
}

.selected {
    fill: #3b452e;
    stroke: #0c0e0a;
    stroke-width: 1px;
}

.moderate {
    fill: #d0ae3f;
}

.high {
    fill: #c65151;
}

.county-labels,
.tract-labels,
.selected-label {
    font-size: 5px;
    text-anchor: middle;
}

.county-labels {
    fill: #8d8786;
}

.county-labels .city {
    font-size: 7px;
    fill: #bdb7b3;
}

.tract-labels {
    fill: #f1ead5;
    opacity: 0.8;
}

.selected-label {
    fill: #7c828c;
}

.credit {
    position: absolute;
    left: 0;
    bottom: 0;
    padding: 0 1px;
    background-color: #1c2130;
    color: #fff;
    font-size: 5px;
    line-height: 6px;
}

.map-legend {
    font-size: 6px;
    line-height: 8px;
    color: #222;
    white-space: nowrap;
}

.map-legend p {
    font-size: 5px;
    line-height: 6px;
    margin-bottom: 2px;
}

.map-legend ul {
    list-style: none;
}

.map-legend li {
    display: flex;
    align-items: center;
    gap: 1px;
    padding-left: 1px;
}

.swatch {
    width: 7px;
    height: 7px;
    border: 1px solid #000;
    background-color: #978f93;
}

.swatch.high-risk {
    background-color: #b44650;
}

.swatch.moderate-risk {
    background-color: #b09d3e;
}

.viz-toolbar {
    display: flex;
    align-items: center;
    gap: 9px;
    height: 10px;
    padding: 0 14px;
    background-color: #fafafa;
    margin-bottom: 5px;
}

.viz-toolbar svg {
    display: block;
    width: 8px;
    height: 8px;
    fill: none;
    stroke: #777;
}

.viz-toolbar .wide {
    width: 12px;
}

.spacer {
    flex: 1;
}

.tip {
    font-size: 5px;
    line-height: 10px;
    color: #8a8c96;
    margin-bottom: 7px;
}

.tip a {
    color: #1c6fb5;
}

.data-button {
    height: 17px;
    padding: 0 6px;
    border: 1px solid #cdced4;
    border-radius: 3px;
    font-size: 6px;
}
```
